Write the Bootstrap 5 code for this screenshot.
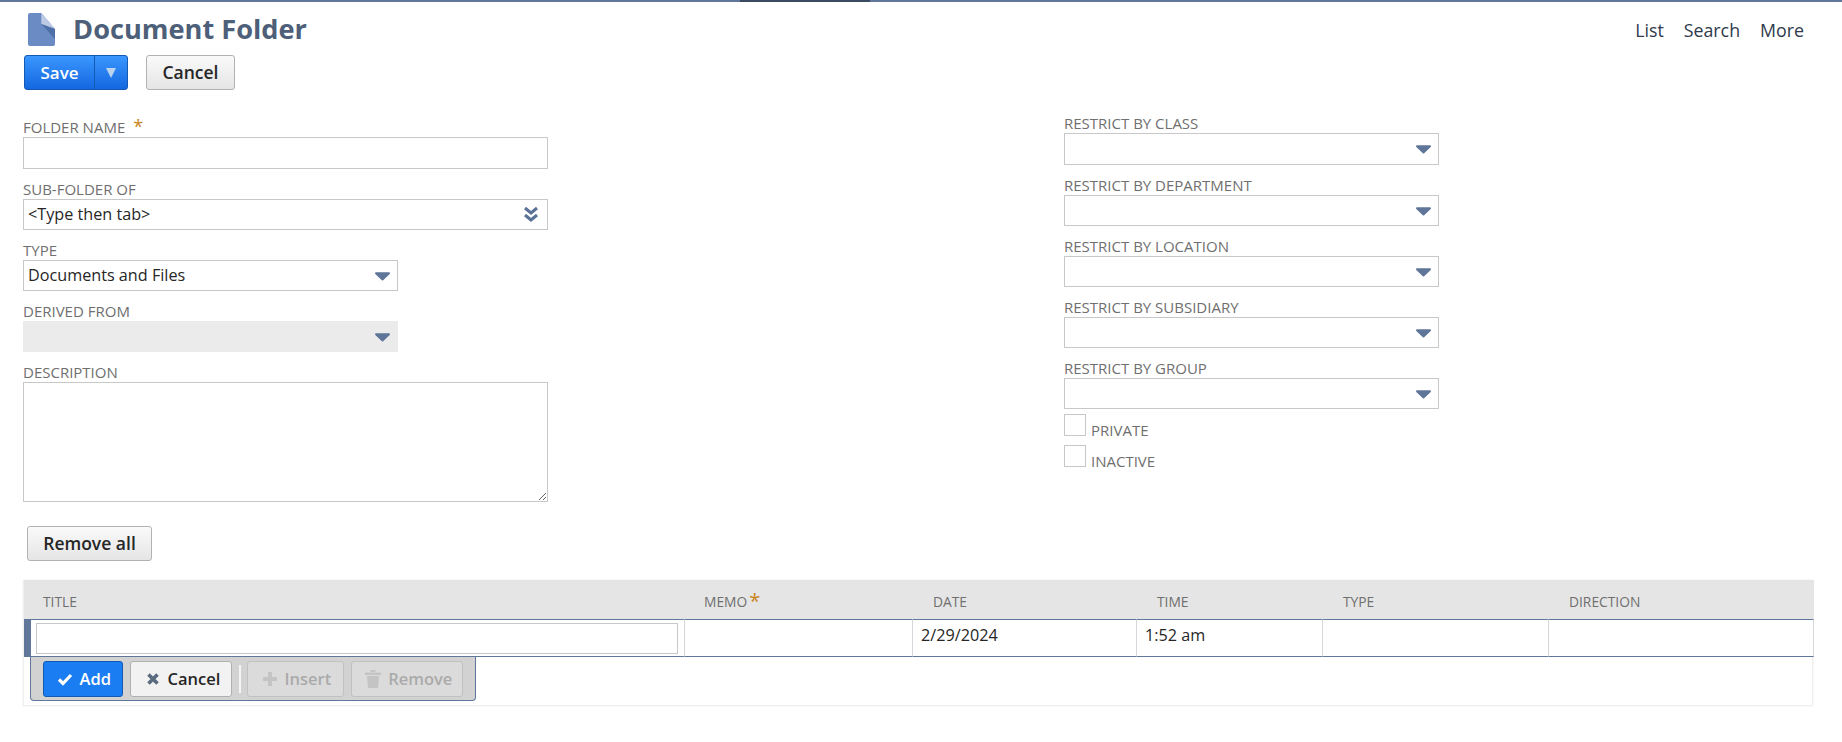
<!DOCTYPE html>
<html lang="en">
<head>
<meta charset="utf-8">
<title>Document Folder</title>
<link href="https://cdn.jsdelivr.net/npm/bootstrap@5.3.0/dist/css/bootstrap.min.css" rel="stylesheet">
<style>
body{font-family:"Open Sans","Noto Sans",sans-serif;font-size:14px;color:#262626;background:#fff;overflow:hidden;height:742px}
.topbar{height:2px;background:#607799;display:flex;justify-content:center}
.topbar-seg{width:130px;margin-left:-232px;background:#3a4a60}
.page{padding:0 38px 0 23px}
.head{height:53px;padding:11px 0 0 5px}
.doc-ico{width:27px;height:33px;flex:none}
.page-title{font-size:27.200px;font-weight:700;color:#4d5f79;margin:0 0 0 18px;line-height:32px}
.top-links{gap:20px;font-size:17.800px;color:#2f3a4c;padding:4px 0 0}
.top-links a{color:#2f3a4c;text-decoration:none}
.nsbtn{height:35px;font-size:17.500px;font-weight:600;border:1px solid #b2b2b2;border-radius:3px;background:linear-gradient(#fafafa,#e5e5e5);color:#262626;padding:0;line-height:33px;--bs-btn-padding-y:0}
.split{display:flex;width:104px;height:35px;margin-left:1px;border:1px solid #125ab2;border-radius:3px;background:linear-gradient(#3a97ff,#1467e0);color:#fff;font-size:17px;font-weight:600;line-height:33px}
.split-main{width:70px;text-align:center;border-right:1px solid #125ab2}
.split-arrow{flex:1;display:flex;align-items:center;justify-content:center}
.btn-cancel-top{width:89px;margin-left:18px}
.form-area{display:flex;margin-top:28px}
.col-left{width:1041px}
.col-right{width:375px;margin-top:-4px}
.fld-label{display:block;font-size:15px;line-height:19px;color:#6f6f6f;text-transform:uppercase;margin:0;white-space:nowrap}
.fld-label .req{color:#c9841b;font-size:18px;line-height:14px;margin-left:4px}
.fld{position:relative;height:32px;border:1px solid #c8c8c8;background:#fff;margin-bottom:11px;padding:0 4px;font-size:16.200px;line-height:28px;color:#262626}
.fld.short{height:31px}
.w-wide{width:525px}
.w-mid{width:375px}
.fld.off{background:#ebebeb;border-color:#ebebeb}
.fld svg{position:absolute;right:7px;top:11px}
.fld svg.dbl{top:6px;right:8px}
.fld-input{width:525px;height:32px;border:1px solid #c8c8c8;border-radius:0;margin-bottom:11px;display:block;padding:0 4px}
.fld-area{width:525px;height:120px;border:1px solid #c8c8c8;border-radius:0;display:block;padding:4px;resize:both}
.col-right .fld.chk-gap{margin-bottom:5px}
.chk-row{display:flex;height:31px;color:#6f6f6f;text-transform:uppercase;font-size:15px}
.chk-box{width:22px;height:22px;border:1px solid #c8c8c8;background:#fff;flex:none}
.chk-row span{margin-left:5px;line-height:19px;margin-top:7px}
.btn-removeall{width:125px;margin:24px 0 19px 4px;display:block}
.grid-wrap{width:1790px;height:126px;border:1px solid #efefef;border-top:0;box-shadow:0 0 1px #ddd}
.line-table{table-layout:fixed;width:1790px;margin:0;border-collapse:separate;border-spacing:0}
.line-table col.c1{width:661px}.line-table col.c2{width:228px}.line-table col.c3{width:224px}.line-table col.c4{width:186px}.line-table col.c5{width:226px}.line-table col.c6{width:265px}
.line-table th{height:39px;background:#e5e5e5;font-size:13.800px;font-weight:400;color:#6f6f6f;text-transform:uppercase;padding:5px 0 0 20px;border:0;vertical-align:middle;box-shadow:none;line-height:18px}
.line-table th.t-first{padding-left:19px}
.line-table th:nth-child(2){padding-left:19px}
.line-table th:nth-child(3){padding-left:20px}
.line-table th .req{color:#c9841b;font-size:20px;line-height:10px;margin-left:2px;vertical-align:-1px}
.line-table td{height:38px;padding:0 0 6px 8px;border-top:1px solid #607799;border-bottom:1px solid #607799;border-right:1px solid #d4d8dc;font-size:16.200px;color:#262626;vertical-align:middle;background:#fff;box-shadow:none;line-height:22px}
.line-table td.t-edit{border-left:7px solid #607799;padding:0 5px;}
.title-input{display:block;width:642px;height:31px;border:1px solid #c8c8c8;border-radius:0;padding:0 4px}
.toolbar{width:446px;height:44px;margin-left:6px;background:#d2d2d2;border:1px solid #607799;border-top:0;border-radius:0 0 4px 4px;padding:4px 12px;display:flex;align-items:flex-start}
.tool{height:36px;border:1px solid #b0b0b0;border-radius:3px;background:#f2f2f2;font-size:16.500px;font-weight:600;color:#262626;display:flex;align-items:center;justify-content:center;gap:7px;padding:0 0 0 2px}
.tool.go{width:80px;background:#1a7df2;border-color:#125ab2;color:#fff}
.tool.stop{width:103px;margin-left:7px;padding-left:5px}
.tool.dim{background:#e0e0e0;color:#969696;border-color:#b8b8b8;padding-left:4px}
.tool.ins{width:97px}.tool.rem{width:113px;margin-left:7px}
.tool-sep{width:2px;height:28px;background:#f4f4f4;margin:4px 6px 0 7px}
</style>
</head>
<body>
<div class="topbar"><div class="topbar-seg"></div></div>
<div class="page">
  <div class="head d-flex justify-content-between">
    <div class="d-flex align-items-start">
      <svg class="doc-ico" viewBox="0 0 27 33"><path d="M2 0h11.300L27 16v15a2 2 0 0 1-2 2H2a2 2 0 0 1-2-2V2a2 2 0 0 1 2-2z" fill="#6a8bc4"/><path d="M13.300 0L27 16l-13.700-5z" fill="#bccbe3"/><path d="M13.300 11L27 16v10z" fill="#4f6fa8"/></svg>
      <h1 class="page-title">Document Folder</h1>
    </div>
    <div class="top-links d-flex"><a href="#">List</a><a href="#">Search</a><a href="#">More</a></div>
  </div>
  <div class="d-flex">
    <div class="split"><div class="split-main">Save</div><div class="split-arrow"><svg width="12" height="12" viewBox="0 0 12 12"><path d="M1 1h10L6 11z" fill="#bcd3ee"/></svg></div></div>
    <button type="button" class="btn nsbtn btn-cancel-top">Cancel</button>
  </div>
  <div class="form-area">
    <div class="col-left">
      <label class="fld-label">Folder Name <span class="req">*</span></label>
      <input class="form-control fld-input" type="text">
      <label class="fld-label">Sub-Folder Of</label>
      <div class="fld short w-wide">&lt;Type then tab&gt;<svg class="dbl" width="16" height="17" viewBox="0 0 16 17"><path d="M2 2l6 5 6-5M2 9l6 5 6-5" fill="none" stroke="#5a7296" stroke-width="3"/></svg></div>
      <label class="fld-label">Type</label>
      <div class="fld short w-mid">Documents and Files<svg width="15" height="9" viewBox="0 0 16 9"><path d="M1 0h14a1 1 0 0 1 .7 1.700L8.700 8.500a1 1 0 0 1-1.400 0L.3 1.700A1 1 0 0 1 1 0z" fill="#5f7699"/></svg></div>
      <label class="fld-label">Derived From</label>
      <div class="fld short w-mid off"><svg width="15" height="9" viewBox="0 0 16 9"><path d="M1 0h14a1 1 0 0 1 .7 1.700L8.700 8.500a1 1 0 0 1-1.400 0L.3 1.700A1 1 0 0 1 1 0z" fill="#5f7699"/></svg></div>
      <label class="fld-label">Description</label>
      <textarea class="form-control fld-area"></textarea>
    </div>
    <div class="col-right">
      <label class="fld-label">Restrict by Class</label>
      <div class="fld w-mid"><svg width="15" height="9" viewBox="0 0 16 9"><path d="M1 0h14a1 1 0 0 1 .7 1.700L8.700 8.500a1 1 0 0 1-1.400 0L.3 1.700A1 1 0 0 1 1 0z" fill="#5f7699"/></svg></div>
      <label class="fld-label">Restrict by Department</label>
      <div class="fld short w-mid"><svg width="15" height="9" viewBox="0 0 16 9"><path d="M1 0h14a1 1 0 0 1 .7 1.700L8.700 8.500a1 1 0 0 1-1.400 0L.3 1.700A1 1 0 0 1 1 0z" fill="#5f7699"/></svg></div>
      <label class="fld-label">Restrict by Location</label>
      <div class="fld short w-mid"><svg width="15" height="9" viewBox="0 0 16 9"><path d="M1 0h14a1 1 0 0 1 .7 1.700L8.700 8.500a1 1 0 0 1-1.400 0L.3 1.700A1 1 0 0 1 1 0z" fill="#5f7699"/></svg></div>
      <label class="fld-label">Restrict by Subsidiary</label>
      <div class="fld short w-mid"><svg width="15" height="9" viewBox="0 0 16 9"><path d="M1 0h14a1 1 0 0 1 .7 1.700L8.700 8.500a1 1 0 0 1-1.400 0L.3 1.700A1 1 0 0 1 1 0z" fill="#5f7699"/></svg></div>
      <label class="fld-label">Restrict by Group</label>
      <div class="fld short w-mid chk-gap"><svg width="15" height="9" viewBox="0 0 16 9"><path d="M1 0h14a1 1 0 0 1 .7 1.700L8.700 8.500a1 1 0 0 1-1.400 0L.3 1.700A1 1 0 0 1 1 0z" fill="#5f7699"/></svg></div>
      <div class="chk-row"><div class="chk-box"></div><span>Private</span></div>
      <div class="chk-row"><div class="chk-box"></div><span>Inactive</span></div>
    </div>
  </div>
  <button type="button" class="btn nsbtn btn-removeall">Remove all</button>
  <div class="grid-wrap">
    <table class="table line-table">
      <colgroup><col class="c1"><col class="c2"><col class="c3"><col class="c4"><col class="c5"><col class="c6"></colgroup>
      <thead><tr><th class="t-first">Title</th><th>Memo<span class="req">*</span></th><th>Date</th><th>Time</th><th>Type</th><th>Direction</th></tr></thead>
      <tbody><tr><td class="t-edit"><input class="form-control title-input" type="text"></td><td></td><td>2/29/2024</td><td>1:52 am</td><td></td><td></td></tr></tbody>
    </table>
    <div class="toolbar">
      <button type="button" class="btn tool go"><svg width="16" height="13" viewBox="0 0 16 13"><path d="M2 6.500l4 4 8-8.500" fill="none" stroke="#fff" stroke-width="3.200"/></svg>Add</button>
      <button type="button" class="btn tool stop"><svg width="14" height="14" viewBox="0 0 14 14"><path d="M2.500 2.500l9 9M11.500 2.500l-9 9" fill="none" stroke="#5a6b80" stroke-width="3.600"/></svg>Cancel</button>
      <div class="tool-sep"></div>
      <button type="button" class="btn tool dim ins" disabled><svg width="14" height="14" viewBox="0 0 14 14"><path d="M7 0v14M0 7h14" fill="none" stroke="#bdbdbd" stroke-width="4"/></svg>Insert</button>
      <button type="button" class="btn tool dim rem" disabled><svg width="16" height="18" viewBox="0 0 16 18"><path d="M0 2.500h16v2.500H0zM5.500 0h5v2h-5zM2 6h12l-1 12H3z" fill="#bdbdbd"/></svg>Remove</button>
    </div>
  </div>
</div>
<script src="https://cdn.jsdelivr.net/npm/bootstrap@5.3.0/dist/js/bootstrap.bundle.min.js"></script>
</body>
</html>
